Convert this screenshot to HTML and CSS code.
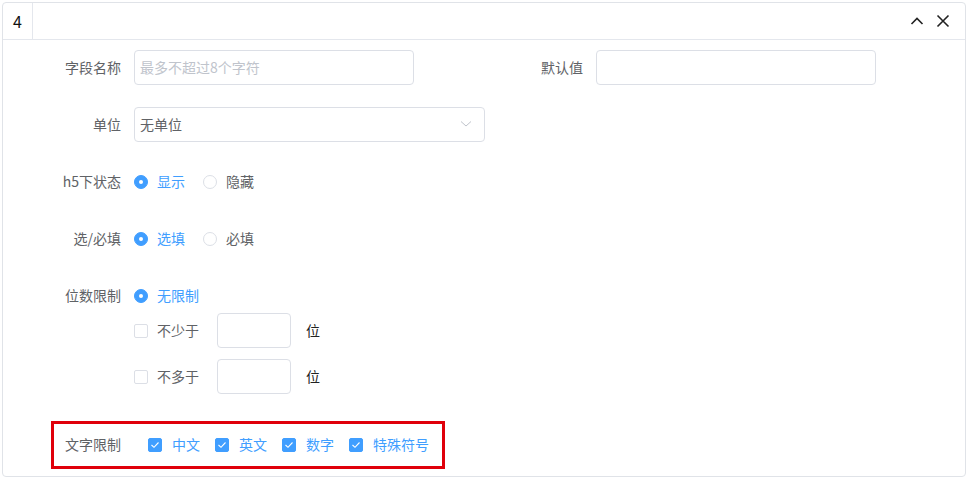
FILE: index.html
```html
<!DOCTYPE html>
<html lang="zh-CN">
<head>
<meta charset="utf-8">
<link rel="stylesheet" href="styles.css">
</head>
<body>
<div class="card">
  <div class="header">
    <div class="tab">4</div>
    <div class="tools">
      <svg class="ico" width="14" height="14" viewBox="0 0 14 14"><path d="M1.5 10 L7 4.5 L12.5 10" fill="none" stroke="#222" stroke-width="1.6"/></svg>
      <svg class="ico" width="14" height="14" viewBox="0 0 14 14"><path d="M1.5 1.5 L12.5 12.5 M12.5 1.5 L1.5 12.5" fill="none" stroke="#222" stroke-width="1.6"/></svg>
    </div>
  </div>
  <div class="form">
    <div class="row">
      <div class="group">
        <span class="label">字段名称</span>
        <div class="input w280"><span class="ph">最多不超过8个字符</span></div>
      </div>
      <div class="group">
        <span class="label">默认值</span>
        <div class="input w280"></div>
      </div>
    </div>
    <div class="row">
      <span class="label">单位</span>
      <div class="input w351 select"><span class="val">无单位</span>
        <svg width="12" height="8" viewBox="0 0 12 8"><path d="M1 1.5 L6 6 L11 1.5" fill="none" stroke="#c0c4cc" stroke-width="1"/></svg>
      </div>
    </div>
    <div class="row">
      <span class="label">h5下状态</span>
      <span class="radio on"></span><span class="opt active">显示</span>
      <span class="radio"></span><span class="opt">隐藏</span>
    </div>
    <div class="row">
      <span class="label">选/必填</span>
      <span class="radio on"></span><span class="opt active">选填</span>
      <span class="radio"></span><span class="opt">必填</span>
    </div>
    <div class="row tight">
      <span class="label">位数限制</span>
      <span class="radio on"></span><span class="opt active">无限制</span>
    </div>
    <div class="sub">
      <span class="cb"></span><span class="opt">不少于</span>
      <div class="input w74"></div>
      <span class="unit">位</span>
    </div>
    <div class="sub">
      <span class="cb"></span><span class="opt">不多于</span>
      <div class="input w74"></div>
      <span class="unit">位</span>
    </div>
    <div class="highlight">
      <span class="label short">文字限制</span>
      <span class="cb on"><svg width="10" height="8" viewBox="0 0 10 8"><path d="M1.5 4 L4 6.3 L8.5 1.5" fill="none" stroke="#fff" stroke-width="1.1"/></svg></span><span class="opt active">中文</span>
      <span class="cb on"><svg width="10" height="8" viewBox="0 0 10 8"><path d="M1.5 4 L4 6.3 L8.5 1.5" fill="none" stroke="#fff" stroke-width="1.1"/></svg></span><span class="opt active">英文</span>
      <span class="cb on"><svg width="10" height="8" viewBox="0 0 10 8"><path d="M1.5 4 L4 6.3 L8.5 1.5" fill="none" stroke="#fff" stroke-width="1.1"/></svg></span><span class="opt active">数字</span>
      <span class="cb on"><svg width="10" height="8" viewBox="0 0 10 8"><path d="M1.5 4 L4 6.3 L8.5 1.5" fill="none" stroke="#fff" stroke-width="1.1"/></svg></span><span class="opt active last">特殊符号</span>
    </div>
  </div>
</div>
</body>
</html>
```
FILE: styles.css
```css
* { box-sizing: border-box; }
html, body { margin: 0; padding: 0; background: #fff; }
body {
  font-family: "Microsoft YaHei", "Noto Sans CJK SC", "Liberation Sans", sans-serif;
  font-size: 14px;
  color: #606266;
}
.card {
  margin: 2px 0 0 2px;
  width: 964px;
  height: 475px;
  border: 1px solid #e0e3e8;
  border-radius: 4px;
}
.header {
  display: flex;
  height: 37px;
  border-bottom: 1px solid #e4e7ed;
}
.tab {
  width: 30px;
  border-right: 1px solid #e4e7ed;
  font-size: 16px;
  color: #111;
  line-height: 36px;
  padding-left: 10px;
}
.tools {
  margin-left: auto;
  display: flex;
  align-items: center;
  gap: 12px;
  padding-right: 15px;
}
.ico { display: block; }
.form { padding-top: 10px; }
.row {
  display: flex;
  align-items: center;
  height: 35px;
  margin-bottom: 22px;
}
.row.tight { margin-bottom: 0; }
.group { display: flex; align-items: center; width: 462px; }
.label {
  width: 118px;
  text-align: right;
  margin-right: 13px;
  color: #606266;
  white-space: nowrap;
  line-height: 1;
  padding-bottom: 2px;
}
.input {
  height: 35px;
  border: 1px solid #dcdfe6;
  border-radius: 4px;
  display: flex;
  align-items: center;
  padding: 0 5px 2px;
  background: #fff;
}
.w280 { width: 280px; }
.w351 { width: 351px; }
.w74 { width: 74px; }
.ph { color: #c0c4cc; }
.val { color: #606266; }
.select { justify-content: space-between; padding-right: 12px; }
.radio {
  width: 14px;
  height: 14px;
  border-radius: 50%;
  border: 1px solid #dcdfe6;
  margin-right: 9px;
  flex: none;
  position: relative;
  background: #fff;
}
.radio.on { background: #409eff; border-color: #409eff; }
.radio.on::after {
  content: "";
  position: absolute;
  left: 4px; top: 4px;
  width: 4px; height: 4px;
  border-radius: 50%;
  background: #fff;
}
.opt { margin-right: 18px; color: #606266; white-space: nowrap; line-height: 1; padding-bottom: 2px; }
.opt.active { color: #409eff; }
.sub {
  display: flex;
  align-items: center;
  height: 35px;
  padding-left: 131px;
  margin-bottom: 11px;
}
.sub .opt { margin-right: 18px; }
.cb {
  width: 14px;
  height: 14px;
  border: 1px solid #dcdfe6;
  border-radius: 2px;
  margin-right: 9px;
  flex: none;
  display: flex;
  align-items: center;
  justify-content: center;
  background: #fff;
}
.cb.on { background: #409eff; border-color: #409eff; }
.unit { color: #222; margin-left: 15px; line-height: 1; padding-bottom: 2px; }
.highlight {
  margin: 27px 0 0 48px;
  width: 394px;
  height: 48px;
  border: 3px solid #e0000a;
  display: flex;
  align-items: center;
}
.label.short { width: 67px; margin-right: 27px; }
.highlight .cb { margin-right: 10px; }
.highlight .opt { margin-right: 15px; }
.highlight .opt.last { margin-right: 0; }
```
